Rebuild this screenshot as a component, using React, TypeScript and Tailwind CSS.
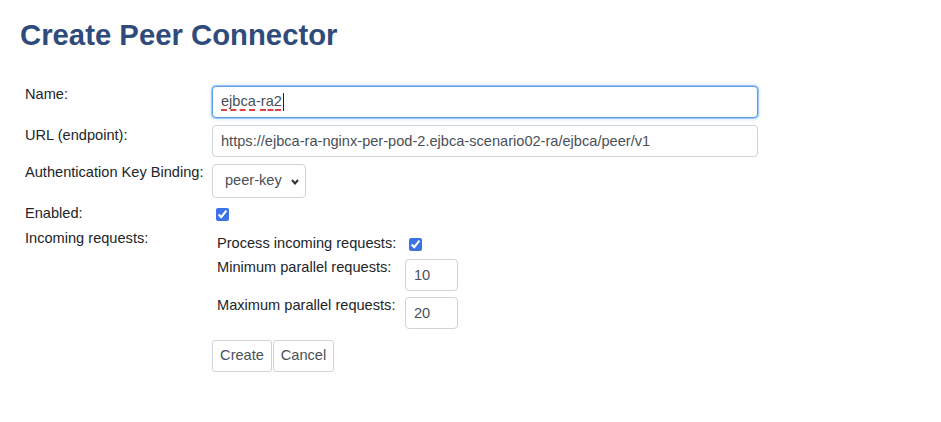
const font = { fontFamily: '"Liberation Sans", Arial, sans-serif' };

const Label = ({ children, pt = 0 }: { children: React.ReactNode; pt?: number }) => (
  <div className="w-[187px] shrink-0 text-[14.6px] leading-[17px] text-[#212529]" style={{ paddingTop: pt }}>
    {children}
  </div>
);

const Check = () => (
  <input
    type="checkbox"
    defaultChecked
    className="w-[13px] h-[13px] m-0 accent-[#3b73e6]"
  />
);

const NumberBox = ({ value }: { value: string }) => (
  <input
    type="text"
    defaultValue={value}
    className="w-[53px] h-[32px] border border-[#ced4da] rounded-[4px] pl-[8px] text-[14.6px] text-[#495057] bg-white outline-none"
  />
);

export default function App() {
  return (
    <div className="min-h-[422px] bg-white px-[20px] pt-[18px]" style={font}>
      <h1 className="text-[29.3px] leading-[34px] font-bold text-[#2f4b7c]">Create Peer Connector</h1>

      <div className="ml-[5px] mt-[34px] flex flex-col gap-[7px]">
        {/* Name */}
        <div className="flex items-start">
          <Label>Name:</Label>
          <div className="w-[546px] h-[32px] border border-[#5f9fe6] rounded-[4px] shadow-[0_0_0_1px_#9cc6f2,0_0_4px_rgba(102,160,233,0.5)] flex items-center pl-[8px] text-[14.6px] text-[#495057] bg-white">
            <span className="underline decoration-dashed decoration-[#e04040] decoration-[1.5px] underline-offset-[3px]">ejbca</span>
            <span>-</span>
            <span className="underline decoration-dashed decoration-[#e04040] decoration-[1.5px] underline-offset-[3px]">ra2</span>
            <span className="inline-block w-px h-[18px] bg-[#222] ml-px" />
          </div>
        </div>

        {/* URL */}
        <div className="flex items-start">
          <Label pt={2}>URL (endpoint):</Label>
          <input
            type="text"
            defaultValue="https://ejbca-ra-nginx-per-pod-2.ejbca-scenario02-ra/ejbca/peer/v1"
            className="w-[546px] h-[32px] border border-[#ced4da] rounded-[4px] pl-[8px] text-[14.6px] text-[#495057] bg-white outline-none"
          />
        </div>

        {/* Key binding */}
        <div className="flex items-start">
          <Label pt={0}>Authentication Key Binding:</Label>
          <div className="relative w-[94px] h-[34px] border border-[#ced4da] rounded-[4px] bg-white flex items-center pl-[12px] text-[14.6px] text-[#495057]">
            peer-key
            <svg className="absolute right-[6px] top-[14px]" width="8" height="6" viewBox="0 0 8 6">
              <polyline points="1,1 4,4.5 7,1" fill="none" stroke="#333" strokeWidth="2" />
            </svg>
          </div>
        </div>

        {/* Enabled */}
        <div className="flex items-start h-[18px]">
          <Label>Enabled:</Label>
          <div className="pl-[4px] pt-[3px] flex">
            <Check />
          </div>
        </div>

        {/* Incoming */}
        <div className="flex items-start">
          <Label>Incoming requests:</Label>
          <div className="flex flex-col">
            <div className="ml-[5px] pt-[5px] flex flex-col gap-[6px]">
              <div className="flex items-start h-[18px]">
                <div className="w-[188px] text-[14.6px] leading-[17px] text-[#212529]">Process incoming requests:</div>
                <div className="pl-[4px] pt-[3px] flex">
                  <Check />
                </div>
              </div>
              <div className="flex items-start">
                <div className="w-[188px] text-[14.6px] leading-[17px] text-[#212529]">Minimum parallel requests:</div>
                <NumberBox value="10" />
              </div>
              <div className="flex items-start">
                <div className="w-[188px] text-[14.6px] leading-[17px] text-[#212529]">Maximum parallel requests:</div>
                <NumberBox value="20" />
              </div>
            </div>
            <div className="mt-[11px] flex gap-[1px]">
              <button className="w-[60px] h-[32px] border border-[#ced4da] rounded-[3px] bg-white text-[14.6px] text-[#495057]">Create</button>
              <button className="w-[61px] h-[32px] border border-[#ced4da] rounded-[3px] bg-white text-[14.6px] text-[#495057]">Cancel</button>
            </div>
          </div>
        </div>
      </div>
    </div>
  );
}
